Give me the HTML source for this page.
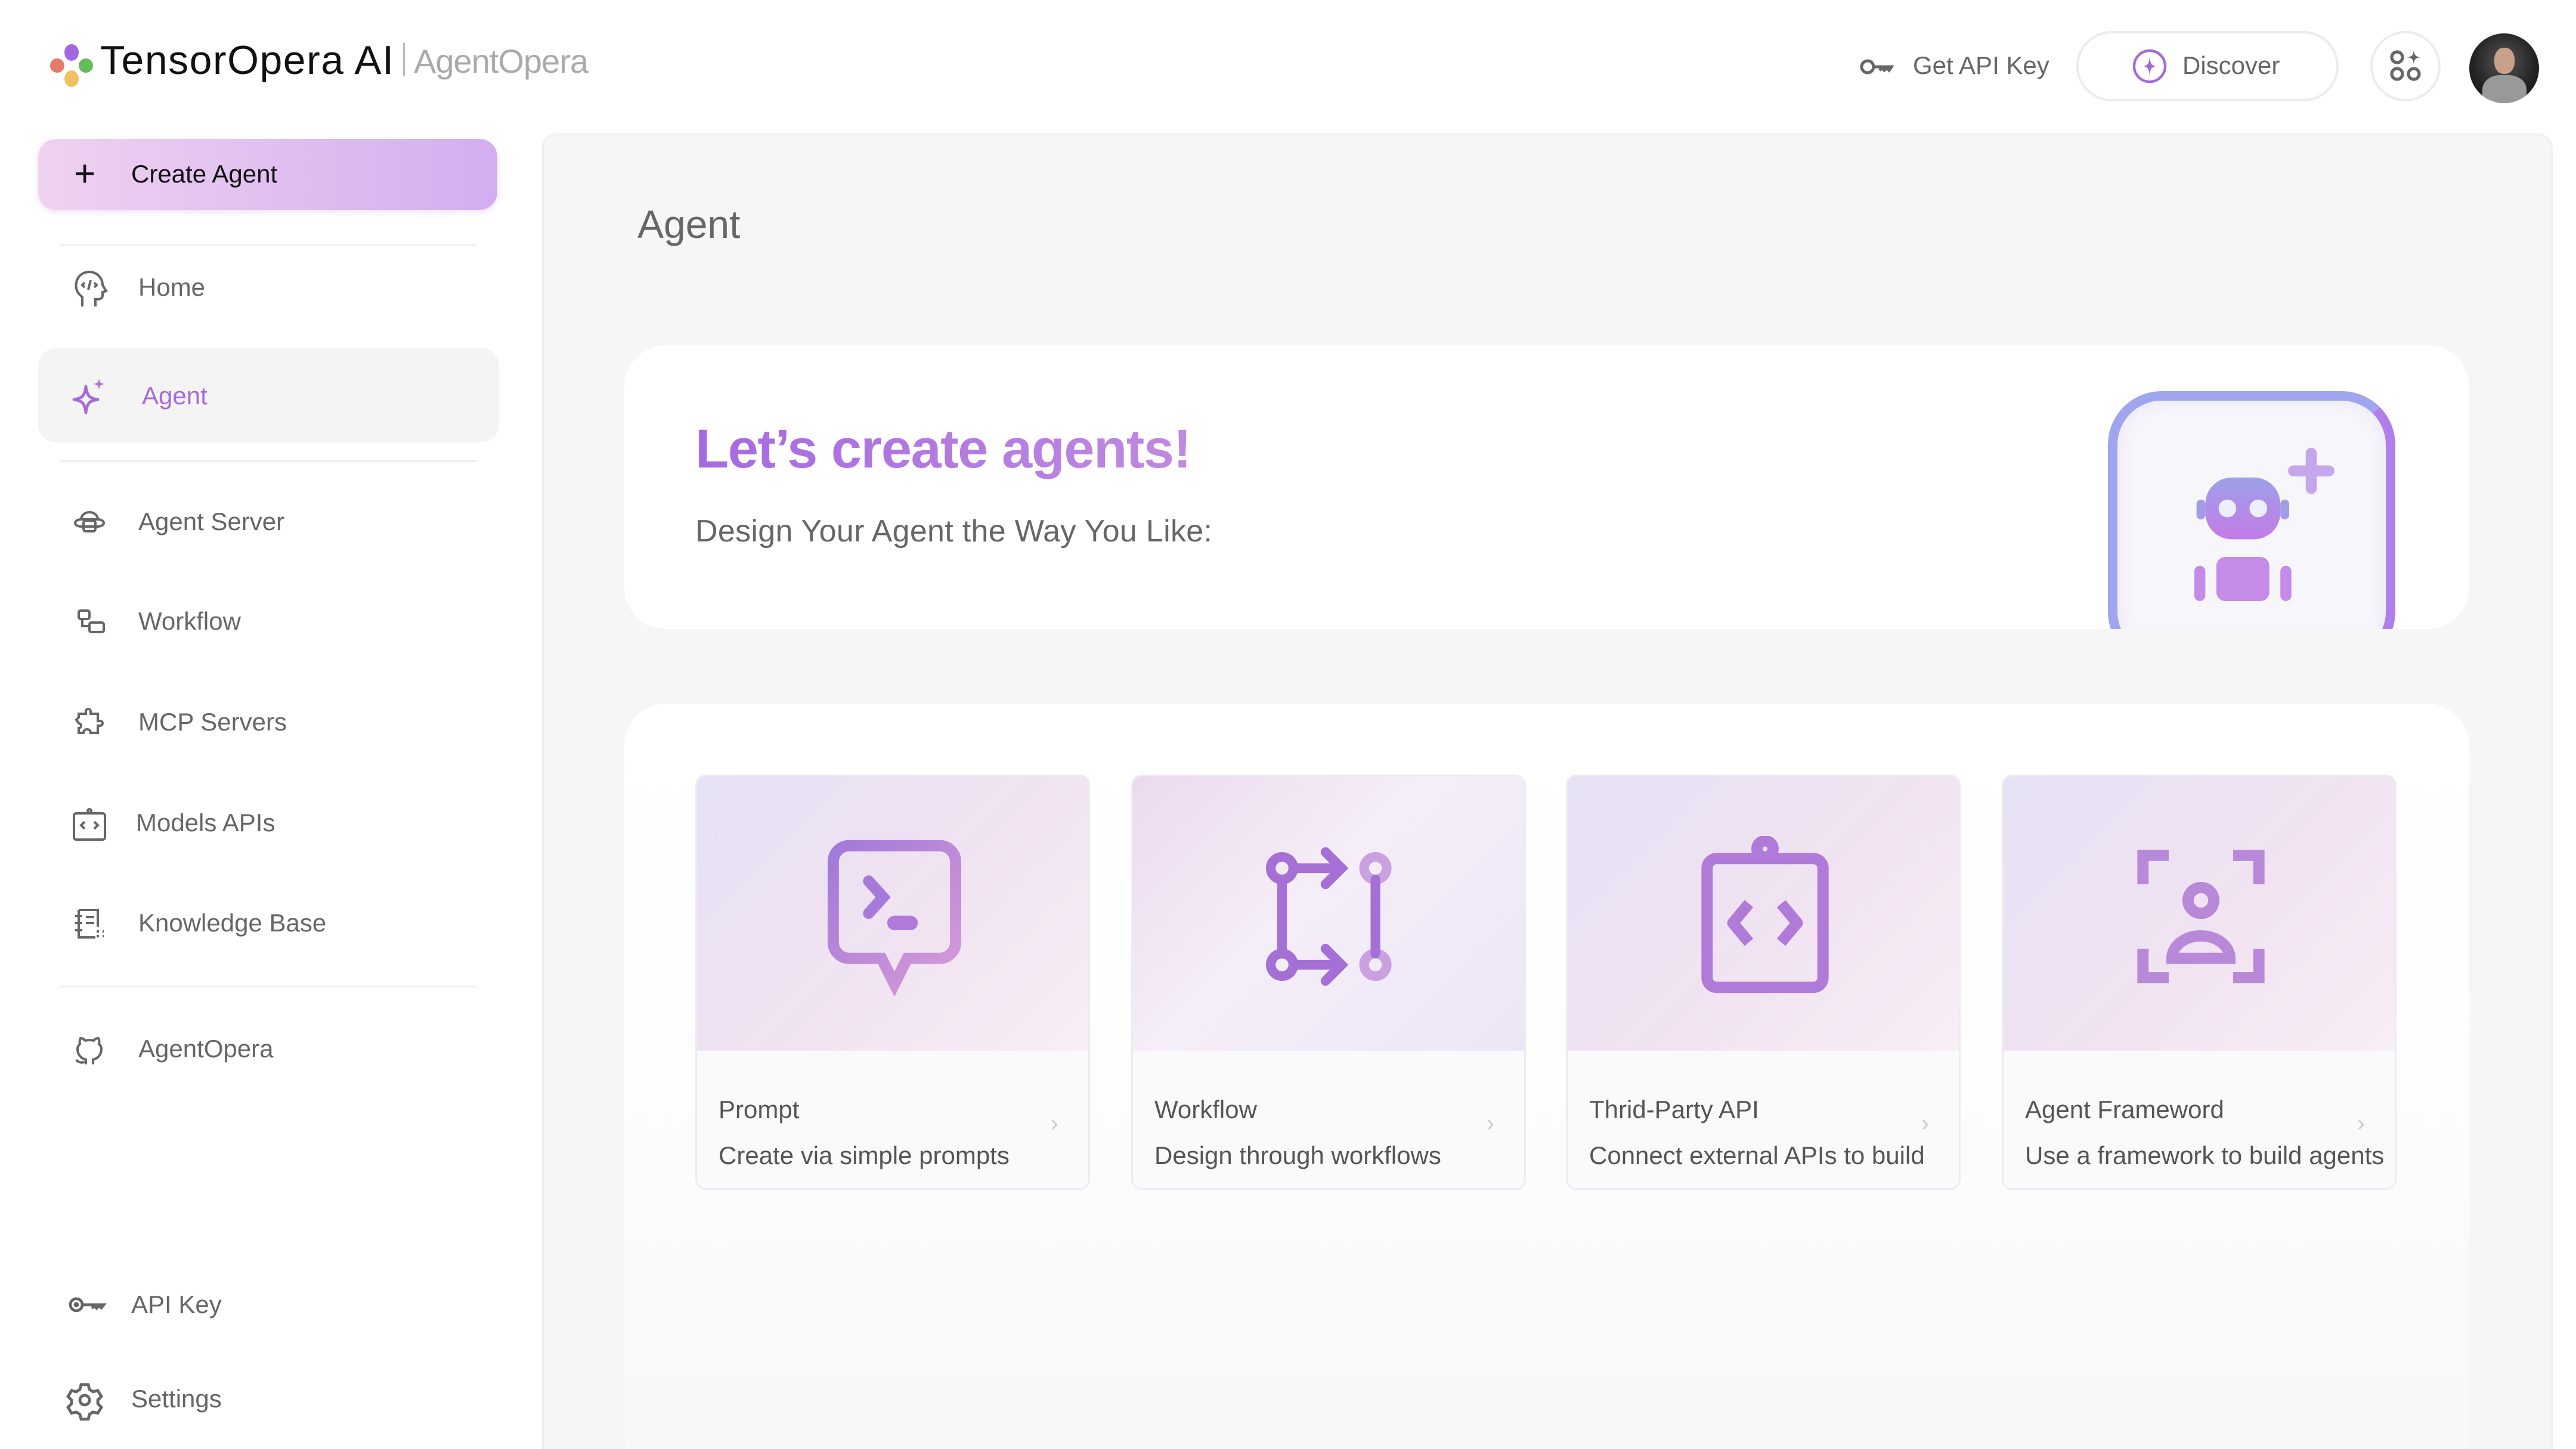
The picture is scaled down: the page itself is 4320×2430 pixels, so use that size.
<!DOCTYPE html>
<html style="overflow:hidden"><head><meta charset="utf-8"><style>
*{margin:0;padding:0;box-sizing:border-box}
html,body{width:4320px;height:2430px;overflow:hidden}
body{background:#fff;font-family:"Liberation Sans",sans-serif;position:relative;color:#666}
.a{position:absolute}
.nav{position:absolute;left:0;display:flex;align-items:center;font-size:42px;color:#666;font-weight:500}
.nav svg{position:absolute;left:110px;width:80px;height:80px;top:-40px}
.nav span{position:absolute;left:232px;top:-24px;white-space:nowrap}
.card{position:absolute;top:1299px;width:662px;height:697px;border:3px solid #ececf0;border-radius:18px;overflow:hidden;background:#fafafc}
.card .img{height:460px;background:linear-gradient(135deg,#e6e1f5 0%,#f1e3f1 55%,#f7eef6 100%);position:relative}
.card .img svg{position:absolute;left:196px;top:100px;width:270px;height:270px}
.card .t{position:absolute;left:36px;top:535px;font-size:42px;font-weight:500;color:#555}
.card .d{position:absolute;left:36px;top:612px;font-size:42px;color:#555;white-space:nowrap}
.card .c{position:absolute;right:50px;top:560px;font-size:40px;color:#ccc}
</style></head><body>
<svg class="a" style="left:80px;top:70px;width:80px;height:80px" viewBox="0 0 40 40">
<ellipse cx="20" cy="9" rx="6" ry="7" fill="#a564e0"/><ellipse cx="8" cy="20" rx="6" ry="6" fill="#e47a6a"/><ellipse cx="32" cy="20" rx="6" ry="6" fill="#63bd5a"/><ellipse cx="20" cy="31" rx="6" ry="7" fill="#eec163"/></svg>
<div class="a" style="left:168px;top:62px;font-size:68px;color:#111;letter-spacing:1.5px">TensorOpera AI</div>
<div class="a" style="left:676px;top:72px;width:3px;height:56px;background:#bbb"></div>
<div class="a" style="left:694px;top:70px;font-size:56px;color:#aaa;letter-spacing:-1px">AgentOpera</div>
<svg class="a" style="left:3118px;top:92px;width:60px;height:40px" viewBox="0 0 30 20" fill="none" stroke="#666" stroke-width="2.5"><circle cx="7" cy="10" r="5"/><path d="M12 10h15l-2 3-2-2-2 2-2-2-2 2"/></svg>
<div class="a" style="left:3208px;top:86px;font-size:42px;color:#666">Get API Key</div>
<div class="a" style="left:3482px;top:52px;width:440px;height:118px;border:4px solid #ececec;border-radius:60px"></div>
<svg class="a" style="left:3575px;top:81px;width:60px;height:60px" viewBox="0 0 30 30"><circle cx="15" cy="15" r="13" fill="none" stroke="#a56ad9" stroke-width="2.2"/><path d="M15 7C15.6 12 16 14 20 15 16 16 15.6 18 15 23 14.4 18 14 16 10 15 14 14 14.4 12 15 7Z" fill="#a56ad9"/></svg>
<div class="a" style="left:3660px;top:86px;font-size:42px;color:#666">Discover</div>
<div class="a" style="left:3975px;top:52px;width:118px;height:118px;border:4px solid #ececec;border-radius:50%"></div>
<svg class="a" style="left:4004px;top:80px;width:60px;height:60px" viewBox="0 0 30 30" fill="none" stroke="#666" stroke-width="2.6"><circle cx="8" cy="8" r="4.5"/><circle cx="8" cy="22" r="4.5"/><circle cx="22" cy="22" r="4.5"/><path d="M22 2C22.5 6.5 23.5 7.5 28 8 23.5 8.5 22.5 9.5 22 14 21.5 9.5 20.5 8.5 16 8 20.5 7.5 21.5 6.5 22 2Z" fill="#666" stroke="none"/></svg>
<div class="a" style="left:4141px;top:56px;width:117px;height:117px;border-radius:50%;background:radial-gradient(circle at 50% 40%,#555 0%,#222 60%,#111 100%);overflow:hidden"><div class="a" style="left:42px;top:24px;width:34px;height:44px;border-radius:45%;background:#c9a08a"></div><div class="a" style="left:22px;top:70px;width:74px;height:60px;border-radius:40% 40% 0 0;background:#999"></div></div>
<div class="a" style="left:64px;top:233px;width:770px;height:119px;border-radius:30px;background:linear-gradient(90deg,#efd2f0,#d2aef0);box-shadow:0 4px 10px rgba(200,160,230,.3)"></div>
<div class="a" style="left:124px;top:256px;font-size:62px;color:#111;font-weight:300">+</div>
<div class="a" style="left:220px;top:268px;font-size:42px;color:#111;font-weight:500">Create Agent</div>
<div class="a" style="left:100px;top:410px;width:700px;height:3px;background:#f0f0f0"></div>
<div class="a" style="left:64px;top:584px;width:773px;height:158px;border-radius:30px;background:#f4f4f4"></div>
<div class="a" style="left:100px;top:772px;width:700px;height:3px;background:#eee"></div>
<div class="a" style="left:100px;top:1653px;width:700px;height:3px;background:#eee"></div>

<div class="nav" style="top:482px"><svg viewBox="0 0 40 40" fill="none" stroke="#666" stroke-width="2"><path d="M14 36v-8c-4-3-6-7-5-12 1-6 6-9 11-9 6 0 11 5 11 11l3 5-3 1v3c0 2-2 3-5 3h-1v6"/><path d="M16 16l-2 2 2 2M24 16l2 2-2 2M21 14l-2 8"/></svg><span>Home</span></div>
<div class="nav" style="top:664px"><svg viewBox="0 0 40 40" fill="#a56ad9"><path d="M17 12C18 20 20 22 27 23 20 24 18 26 17 34 16 26 14 24 7 23 14 22 16 20 17 12Z" fill="none" stroke="#a56ad9" stroke-width="2.4" stroke-linejoin="round"/><path d="M28 5C28.5 9 29 9.5 33 10 29 10.5 28.5 11 28 15 27.5 11 27 10.5 23 10 27 9.5 27.5 9 28 5Z"/></svg><span style="color:#a56ad9;left:238px">Agent</span></div>
<div class="nav" style="top:875px"><svg viewBox="0 0 40 40" fill="none" stroke="#666" stroke-width="2"><path d="M13 18a7 6 0 0 1 14 0M8 21c0-2 3-3 5-3h14c2 0 5 1 5 3s-3 3-5 3H13c-2 0-5-1-5-3z"/><rect x="15" y="19" width="10" height="9" rx="2"/><path d="M19 24h2"/></svg><span>Agent Server</span></div>
<div class="nav" style="top:1042px"><svg viewBox="0 0 40 40" fill="none" stroke="#666" stroke-width="2"><rect x="11" y="11" width="9" height="7" rx="1.5"/><rect x="20" y="21" width="12" height="8" rx="1.5"/><path d="M14 18v6h6"/></svg><span>Workflow</span></div>
<div class="nav" style="top:1211px"><svg viewBox="0 0 40 40" fill="none" stroke="#666" stroke-width="2"><path d="M11 13h6v-2a2 2 0 0 1 4 0v2h6v6h2a2 2 0 0 1 0 4h-2v6h-6a3 3 0 0 0-6 0h-4v-4a2 2 0 0 0 0-4l-2-3 2-2z"/></svg><span>MCP Servers</span></div>
<div class="nav" style="top:1380px"><svg viewBox="0 0 40 40" fill="none" stroke="#666" stroke-width="2"><rect x="7" y="12" width="26" height="22" rx="2"/><circle cx="20" cy="10" r="1.5"/><path d="M16 19l-3 3 3 3M24 19l3 3-3 3"/></svg><span style="left:228px">Models APIs</span></div>
<div class="nav" style="top:1548px"><svg viewBox="0 0 40 40" fill="none" stroke="#666" stroke-width="2"><path d="M11 9h16v14M11 9v23h14M8 14h6M8 20h6M8 26h6M17 15h7M17 20h7M26 27h2M31 27h1M26 31h2M31 31h1"/></svg><span>Knowledge Base</span></div>
<div class="nav" style="top:1759px"><svg viewBox="0 0 40 40" fill="none" stroke="#666" stroke-width="2"><path d="M17 33v-4c-4-1-7-4-7-9 0-2 1-3 2-4-.5-2 0-4 .5-5 2 0 3 1 4 2 2-.5 5-.5 7 0 1-1 2-2 4-2 .5 1 1 3 .5 5 1 1 2 2 2 4 0 5-3 8-7 9v4M16 31c-3 1-6 0-7-2"/></svg><span>AgentOpera</span></div>
<div class="nav" style="top:2188px"><svg style="left:108px" viewBox="0 0 40 40" fill="none" stroke="#666" stroke-width="2.4"><circle cx="10" cy="20" r="5"/><circle cx="10" cy="20" r="1" fill="#666"/><path d="M15 20h18l-2 2.5-2-1.5-2 2-2-2-2 2"/></svg><span style="left:220px">API Key</span></div>
<div class="nav" style="top:2346px"><svg style="left:102px" viewBox="0 0 40 40" fill="none" stroke="#666" stroke-width="2.4"><path d="M17 8h6l1 4 3 2 4-1 3 5-3 3v3l3 3-3 5-4-1-3 2-1 4h-6l-1-4-3-2-4 1-3-5 3-3v-3l-3-3 3-5 4 1 3-2z"/><circle cx="20" cy="21" r="4"/></svg><span style="left:220px">Settings</span></div>

<div class="a" style="left:909px;top:224px;width:3372px;height:2206px;background:#f6f6f6;border:3px solid #efefef;border-bottom:none;border-radius:24px 24px 0 0;overflow:hidden">
<div class="a" style="left:135px;top:953px;width:3094px;height:1300px;background:linear-gradient(#fff 0%,#fdfdfd 50%,#f7f7f7 100%);border-radius:70px"></div>
</div>
<div class="a" style="left:1069px;top:338px;font-size:66px;color:#666;font-weight:500">Agent</div>
<div class="a" style="left:1047px;top:579px;width:3094px;height:476px;background:#fff;border-radius:70px;overflow:hidden">
 <div class="a" style="left:119px;top:122px;font-size:92px;font-weight:700;letter-spacing:-1.5px;background:linear-gradient(90deg,#a56ae0,#c08ae0);-webkit-background-clip:text;color:transparent">Let’s create agents!</div>
 <div class="a" style="left:119px;top:282px;font-size:52px;font-weight:500;color:#666;letter-spacing:0.3px">Design Your Agent the Way You Like:</div>
 <div class="a" style="left:2488px;top:77px;width:482px;height:460px;border-radius:90px;border:16px solid;border-color:#9fa6ef #b07fe8 #c16ae8 #9fa6ef;background:#f7f6fb;box-shadow:inset 0 0 30px #e8e4f5"></div>
 <svg class="a" style="left:2570px;top:170px;width:370px;height:370px" viewBox="0 0 100 100"><defs><linearGradient id="rb" x1="0" y1="0" x2="0" y2="1"><stop offset="0" stop-color="#9da0e8"/><stop offset="1" stop-color="#c47be8"/></linearGradient></defs>
 <rect x="22" y="14" width="34" height="28" rx="12" fill="url(#rb)"/><circle cx="32" cy="28" r="4" fill="#eef"/><circle cx="46" cy="28" r="4" fill="#eef"/><rect x="18" y="24" width="4" height="9" rx="2" fill="#a29ce6"/><rect x="56" y="24" width="4" height="9" rx="2" fill="#a29ce6"/>
 <rect x="27" y="50" width="24" height="20" rx="4" fill="#c68ae8"/><rect x="17" y="54" width="5" height="16" rx="2.5" fill="#c68ae8"/><rect x="56" y="54" width="5" height="16" rx="2.5" fill="#c68ae8"/>
 <path d="M70 3v16M62 11h16" stroke="#c5a7ec" stroke-width="5" stroke-linecap="round"/></svg>
</div>

<div class="card" style="left:1166px"><div class="img"><svg viewBox="0 0 100 100" fill="none" stroke-width="7"><defs><linearGradient id="g1" x1="0" y1="0" x2="1" y2="1"><stop offset="0" stop-color="#a07ad8"/><stop offset="1" stop-color="#d79ad8"/></linearGradient></defs><path d="M22 6h56a10 10 0 0 1 10 10v50a10 10 0 0 1-10 10H58L50 92 42 76H22a10 10 0 0 1-10-10V16A10 10 0 0 1 22 6z" stroke="url(#g1)"/><path d="M34 28l9 10-9 10" stroke="#a57ad8" stroke-linecap="round"/><path d="M50 54h10" stroke="#b07ad8" stroke-width="9" stroke-linecap="round"/></svg></div><div class="t">Prompt</div><div class="d">Create via simple prompts</div><div class="c">›</div></div>
<div class="card" style="left:1897px"><div class="img" style="background:linear-gradient(135deg,#ecd9ee 0%,#f5eef8 45%,#ebe5f7 100%)"><svg viewBox="0 0 100 100" fill="none" stroke="#a570d6" stroke-width="6" stroke-linecap="round"><circle cx="20" cy="20" r="7"/><circle cx="20" cy="80" r="7"/><circle cx="78" cy="20" r="7" stroke="#c9a0e0"/><circle cx="78" cy="80" r="7" stroke="#c9a0e0"/><path d="M20 27v46M78 27v46"/><path d="M27 20h28M47 10l10 10-10 10M27 80h28M47 70l10 10-10 10"/></svg></div><div class="t">Workflow</div><div class="d">Design through workflows</div><div class="c">›</div></div>
<div class="card" style="left:2626px"><div class="img"><svg viewBox="0 0 100 100" fill="none" stroke="#b07ad8" stroke-width="7"><rect x="14" y="14" width="72" height="80" rx="6"/><circle cx="50" cy="8" r="5"/><path d="M40 42l-10 12 10 12M60 42l10 12-10 12" stroke-linejoin="round"/></svg></div><div class="t">Thrid-Party API</div><div class="d">Connect external APIs to build</div><div class="c">›</div></div>
<div class="card" style="left:3357px"><div class="img"><svg viewBox="0 0 100 100" fill="none" stroke="#b889d8" stroke-width="7"><path d="M14 30V12h16M70 12h16v18M14 70v18h16M70 88h16V70"/><circle cx="50" cy="40" r="8"/><path d="M32 76a18 14 0 0 1 36 0z"/></svg></div><div class="t">Agent Frameword</div><div class="d">Use a framework to build agents</div><div class="c">›</div></div>
</body></html>
